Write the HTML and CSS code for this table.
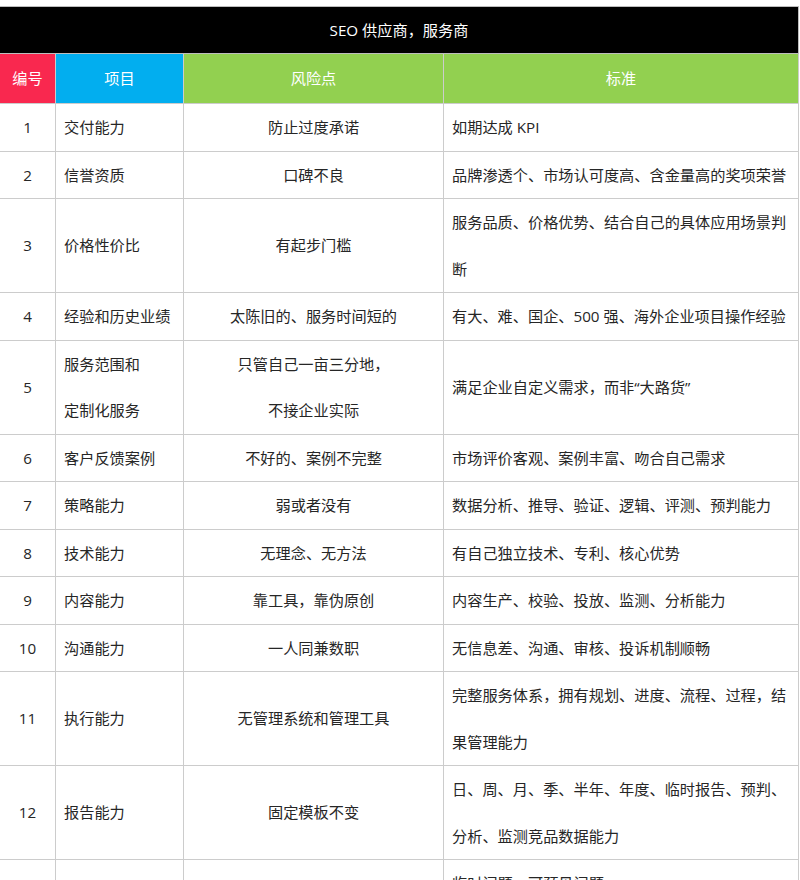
FILE: index.html
```html
<!DOCTYPE html>
<html lang="zh-CN">
<head>
<meta charset="utf-8">
<title>SEO 供应商，服务商</title>
<link rel="stylesheet" href="styles.css">
</head>
<body>
<table class="sheet">
  <colgroup>
    <col class="c-no">
    <col class="c-item">
    <col class="c-risk">
    <col class="c-std">
  </colgroup>
  <thead>
    <tr class="title-row"><th colspan="4">SEO 供应商，服务商</th></tr>
    <tr class="head-row">
      <th class="h-red">编号</th>
      <th class="h-blue">项目</th>
      <th class="h-green">风险点</th>
      <th class="h-green">标准</th>
    </tr>
  </thead>
  <tbody>
    <tr><td class="no">1</td><td class="item">交付能力</td><td class="risk">防止过度承诺</td><td class="std">如期达成 KPI</td></tr>
    <tr><td class="no">2</td><td class="item">信誉资质</td><td class="risk">口碑不良</td><td class="std">品牌渗透个、市场认可度高、含金量高的奖项荣誉</td></tr>
    <tr><td class="no">3</td><td class="item">价格性价比</td><td class="risk">有起步门槛</td><td class="std">服务品质、价格优势、结合自己的具体应用场景判断</td></tr>
    <tr><td class="no">4</td><td class="item">经验和历史业绩</td><td class="risk">太陈旧的、服务时间短的</td><td class="std">有大、难、国企、500 强、海外企业项目操作经验</td></tr>
    <tr><td class="no">5</td><td class="item">服务范围和<br>定制化服务</td><td class="risk">只管自己一亩三分地，<br>不接企业实际</td><td class="std">满足企业自定义需求，而非“大路货”</td></tr>
    <tr><td class="no">6</td><td class="item">客户反馈案例</td><td class="risk">不好的、案例不完整</td><td class="std">市场评价客观、案例丰富、吻合自己需求</td></tr>
    <tr><td class="no">7</td><td class="item">策略能力</td><td class="risk">弱或者没有</td><td class="std">数据分析、推导、验证、逻辑、评测、预判能力</td></tr>
    <tr><td class="no">8</td><td class="item">技术能力</td><td class="risk">无理念、无方法</td><td class="std">有自己独立技术、专利、核心优势</td></tr>
    <tr><td class="no">9</td><td class="item">内容能力</td><td class="risk">靠工具，靠伪原创</td><td class="std">内容生产、校验、投放、监测、分析能力</td></tr>
    <tr><td class="no">10</td><td class="item">沟通能力</td><td class="risk">一人同兼数职</td><td class="std">无信息差、沟通、审核、投诉机制顺畅</td></tr>
    <tr><td class="no">11</td><td class="item">执行能力</td><td class="risk">无管理系统和管理工具</td><td class="std">完整服务体系，拥有规划、进度、流程、过程，结果管理能力</td></tr>
    <tr><td class="no">12</td><td class="item">报告能力</td><td class="risk">固定模板不变</td><td class="std">日、周、月、季、半年、年度、临时报告、预判、分析、监测竞品数据能力</td></tr>
    <tr><td class="no">13</td><td class="item">应急能力</td><td class="risk">推诿、无预案</td><td class="std">临时问题、可预见问题<br>均有应对预案和处理机制</td></tr>
  </tbody>
</table>
</body>
</html>
```

FILE: styles.css
```css
html, body {
  margin: 0;
  padding: 0;
  background: #ffffff;
}

body {
  padding-top: 6px;
  font-family: "Open Sans", "Noto Sans CJK SC", sans-serif;
  font-size: 15.2px;
  color: #262626;
}

.sheet {
  border-collapse: collapse;
  table-layout: fixed;
  width: 799px;
  margin-left: -1px;
}

.c-no { width: 56px; }
.c-item { width: 128px; }
.c-risk { width: 260px; }
.c-std { width: 355px; }

.sheet th,
.sheet td {
  border: 1px solid #cccccc;
  padding: 0 8px;
  line-height: 46.5px;
  font-weight: normal;
  vertical-align: middle;
}

.title-row th {
  background: #000000;
  color: #ffffff;
  text-align: center;
  line-height: 46px;
  border-color: #bdbdbd;
}

.head-row th {
  color: #ffffff;
  text-align: center;
  line-height: 49px;
  padding: 0;
}

.h-red { background: #f9284f; }
.h-blue { background: #02aeef; }
.h-green { background: #92d050; }

.no { text-align: center; padding: 0; }
.item { text-align: left; }
.risk { text-align: center; }
.std { text-align: left; }
```
